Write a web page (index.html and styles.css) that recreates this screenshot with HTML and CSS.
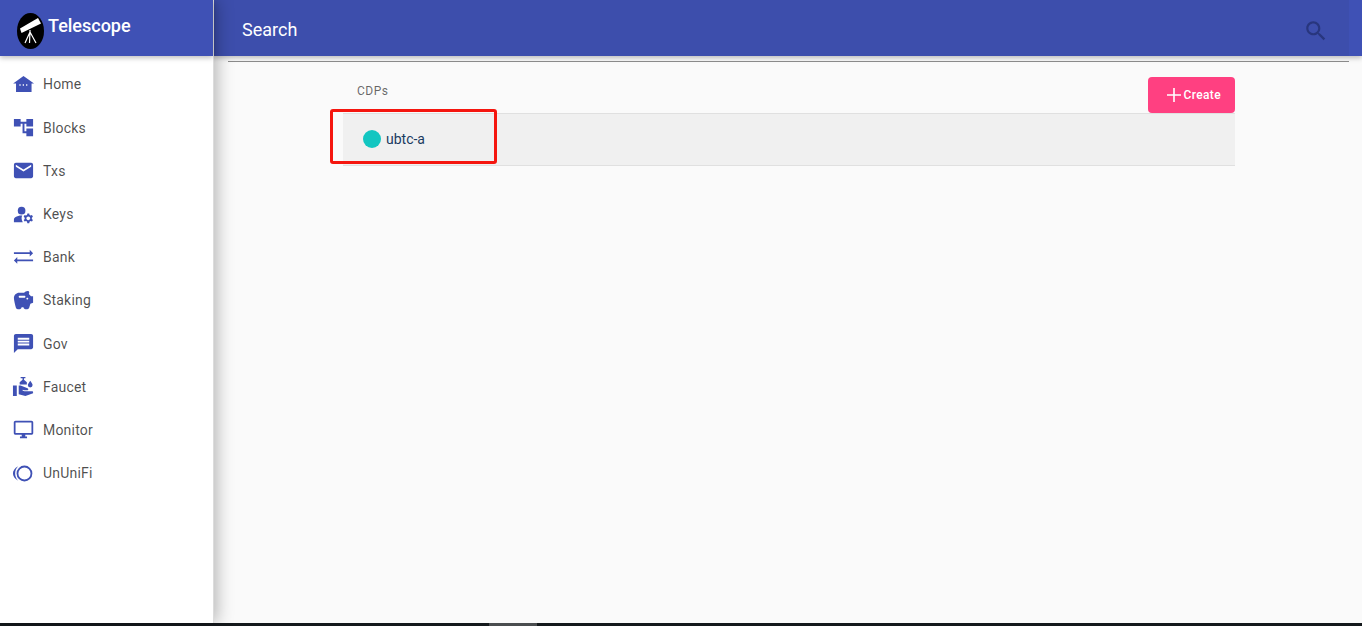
FILE: index.html
```html
<!DOCTYPE html>
<html lang="en">
<head>
<meta charset="utf-8">
<title>Telescope</title>
<link rel="stylesheet" href="styles.css">
</head>
<body>
<div class="app">
  <aside class="sidenav">
    <div class="brand">
      <svg class="brand-logo" viewBox="0 0 27 36">
        <ellipse cx="13.5" cy="18" rx="13.5" ry="18" fill="#000"/>
        <path d="M3 15.500 L21 5 L24 10.500 L4.500 20 Z" fill="#fff"/>
        <path d="M13 17 L13 19 M13 19 L8 30 M13 19 L12.500 30 M13 19 L19 30" stroke="#fff" stroke-width="1.2" fill="none"/>
      </svg>
      <span class="brand-name">Telescope</span>
    </div>
    <nav class="nav">
      <a class="nav-item"><svg class="icon" viewBox="0 0 24 24"><path d="M12 3.100 L23 10.900 H20.400 V19.800 H4.200 V10.900 H1.200 Z M7.700 11.800 H9 V13.300 H7.700 Z M11.200 11.800 H12.500 V13.300 H11.200 Z M14.700 11.800 H16 V13.300 H14.700 Z" fill-rule="evenodd"/></svg><span>Home</span></a>
      <a class="nav-item"><svg class="icon" viewBox="0 0 24 24"><path d="M22 11V3h-7v3H9V3H2v8h7V8h2v10h4v3h7v-8h-7v3h-2V8h2v3z"/></svg><span>Blocks</span></a>
      <a class="nav-item"><svg class="icon" viewBox="0 0 24 24"><path d="M20 4H4c-1.1 0-1.99.9-1.99 2L2 18c0 1.1.9 2 2 2h16c1.1 0 2-.9 2-2V6c0-1.1-.9-2-2-2zm0 4l-8 5-8-5V6l8 5 8-5v2z"/></svg><span>Txs</span></a>
      <a class="nav-item"><svg class="icon" viewBox="0 0 24 24"><circle cx="10" cy="8" r="4"/><path d="M10.67 13.02c-.22-.01-.44-.02-.67-.02-2.42 0-4.68.67-6.61 1.82-.88.52-1.39 1.5-1.39 2.53V20h9.26c-.79-1.13-1.26-2.51-1.26-4 0-1.07.25-2.07.67-2.98z"/><path d="M20.75 16c0-.22-.03-.42-.06-.63l1.14-1.01-1-1.73-1.45.49c-.32-.27-.68-.48-1.08-.63L18 11h-2l-.3 1.49c-.4.15-.76.36-1.08.63l-1.45-.49-1 1.73 1.14 1.01c-.03.21-.06.41-.06.63s.03.42.06.63l-1.14 1.01 1 1.73 1.45-.49c.32.27.68.48 1.08.63L16 21h2l.3-1.49c.4-.15.76-.36 1.08-.63l1.45.49 1-1.73-1.14-1.01c.03-.21.06-.41.06-.63zM17 18c-1.1 0-2-.9-2-2s.9-2 2-2 2 .9 2 2-.9 2-2 2z"/></svg><span>Keys</span></a>
      <a class="nav-item"><svg class="icon" viewBox="0 0 24 24"><path d="M2 6.600h16.500V4L22 7.500 18.500 11V8.400H2zM22 14.100H5.500V11.500L2 15l3.500 3.500v-2.600H22z"/></svg><span>Bank</span></a>
      <a class="nav-item"><svg class="icon" viewBox="0 0 24 24"><path d="M19.83 7.5l-2.27-2.27c.07-.42.18-.81.32-1.15.11-.26.15-.56.09-.87-.13-.72-.83-1.22-1.57-1.21-1.59.03-2.97.81-3.87 2H7.5C4.46 4 2 6.46 2 9.5c0 2.25 1.37 7.48 2.08 10.04.24.86 1.03 1.46 1.93 1.46H8c1.1 0 2-.9 2-2h2c0 1.1.9 2 2 2h2.01c.88 0 1.66-.58 1.92-1.43l1.25-4.16 2.82-.97V7.5h-2.17zM13 9H8c-.55 0-1-.45-1-1s.45-1 1-1h5c.55 0 1 .45 1 1s-.45 1-1 1zm3 2c-.55 0-1-.45-1-1s.45-1 1-1 1 .45 1 1-.45 1-1 1z"/></svg><span>Staking</span></a>
      <a class="nav-item"><svg class="icon" viewBox="0 0 24 24"><path d="M20 2H4c-1.1 0-1.99.9-1.99 2L2 22l4-4h14c1.1 0 2-.9 2-2V4c0-1.1-.9-2-2-2zm-2 12H6v-2h12v2zm0-3H6V9h12v2zm0-3H6V6h12v2z"/></svg><span>Gov</span></a>
      <a class="nav-item"><svg class="icon" viewBox="0 0 24 24"><path d="M1 11h4v11H1zM20 17h-7l-2.09-.73.33-.94L13 16h2.82c.65 0 1.18-.53 1.18-1.18 0-.49-.31-.93-.77-1.11L8.97 11H7v9.02L14 22l8-3v-1c0-.55-.45-1-1-1z"/><path d="M9 2h5v1.500h-1.500V5l3 2.500V10H8V7.500L11 5V3.500H9zM19 6c1 1.500 2.500 3 2.500 4.500a2.500 2.500 0 0 1-5 0c0-.5.2-1 .5-1.500z"/></svg><span>Faucet</span></a>
      <a class="nav-item"><svg class="icon" viewBox="-1 -1 26 26"><path d="M21 2H3c-1.1 0-2 .9-2 2v12c0 1.1.9 2 2 2h7v2H8v2h8v-2h-2v-2h7c1.1 0 2-.9 2-2V4c0-1.1-.9-2-2-2zm0 14H3V4h18v12z"/></svg><span>Monitor</span></a>
      <a class="nav-item"><svg class="icon" viewBox="0 0 24 24"><circle class="ring" cx="13" cy="12" r="7.300"/><path d="M6.500 4.500C2.500 6.500 1 9.500 1 12s1.500 5.500 5.500 7.500C4 17 3.300 14.500 3.300 12s.7-5 3.200-7.500z"/></svg><span>UnUniFi</span></a>
    </nav>
  </aside>
  <div class="main">
    <header class="toolbar">
      <div class="toolbar-inner">
        <span class="search-label">Search</span>
        <svg class="search-icon" viewBox="0 0 24 24"><path d="M15.500 14h-.79l-.28-.27C15.410 12.590 16 11.110 16 9.500 16 5.910 13.090 3 9.500 3S3 5.910 3 9.500 5.910 16 9.500 16c1.610 0 3.090-.59 4.230-1.570l.27.28v.79l5 4.990L20.490 19l-4.990-5zm-6 0C7.010 14 5 11.990 5 9.500S7.010 5 9.500 5 14 7.010 14 9.500 11.990 14 9.500 14z"/></svg>
      </div>
    </header>
    <hr class="divider">
    <section class="content">
      <div class="content-head">
        <span class="section-title">CDPs</span>
        <button class="create-btn"><svg class="plus" viewBox="0 0 14 14"><path d="M6.200 0h1.600v6.200H14v1.600H7.800V14H6.200V7.800H0V6.200h6.200z"/></svg>Create</button>
      </div>
      <div class="list">
        <a class="list-row"><span class="dot"></span><span class="row-label">ubtc-a</span></a>
      </div>
    </section>
  </div>
  <div class="annotation"></div>
</div>
<div class="taskbar"><span class="taskbar-thumb"></span></div>
</body>
</html>
```
FILE: styles.css
```css
* { box-sizing: border-box; }
html, body { margin: 0; height: 100%; overflow: hidden; }
body {
  display: flex;
  flex-direction: column;
  height: 626px;
  font-family: Roboto, "Liberation Sans", sans-serif;
  background: #fafafa;
}
.app { position: relative; display: flex; flex: 1; min-height: 0; }
.sidenav {
  width: 214px;
  flex: none;
  background: #fff;
  border-right: 1px solid #dcdcdc;
  box-shadow: 3px 0 16px rgba(0, 0, 0, .28);
  position: relative;
  z-index: 2;
}
.brand {
  height: 56px;
  background: #3f51b5;
  display: flex;
  align-items: flex-start;
  padding: 13px 0 0 17px;
  box-shadow: 0 2px 5px rgba(0, 0, 0, .25);
}
.brand-logo { width: 27px; height: 36px; flex: none; }
.brand-name {
  color: #fff;
  font-size: 18px;
  font-weight: 500;
  line-height: 26px;
  margin-left: 4px;
}
.nav { display: flex; flex-direction: column; padding-top: 6.900px; }
.nav-item {
  display: flex;
  align-items: center;
  height: 43.200px;
  padding-left: 12px;
  font-size: 14px;
  letter-spacing: .2px;
  color: rgba(0, 0, 0, .7);
}
.icon { width: 23px; height: 23px; fill: #3f51b5; flex: none; margin-right: 8px; }
.ring { fill: none; stroke: #3f51b5; stroke-width: 1.900px; }
.main { flex: 1; min-width: 0; display: flex; flex-direction: column; }
.toolbar {
  height: 56px;
  flex: none;
  background: #3f51b5;
  box-shadow: 0 2px 5px rgba(0, 0, 0, .25);
}
.toolbar-inner {
  height: 56px;
  margin-right: 13px;
  padding: 2px 20px 0 28px;
  background: #3d4eac;
  display: flex;
  align-items: center;
  justify-content: space-between;
}
.search-label { color: #fff; font-size: 18px; }
.search-icon { width: 26px; height: 26px; margin-top: 3px; fill: rgba(20, 30, 80, .5); }
.divider {
  height: 1px;
  margin: 5px 13px 0 14px;
  border: 0;
  background: #8a8a8a;
  flex: none;
}
.content { padding: 15px 127px 0 129px; }
.content-head {
  display: flex;
  justify-content: space-between;
  align-items: flex-start;
  height: 36px;
  padding-left: 14px;
}
.section-title {
  font-size: 12px;
  line-height: 28px;
  letter-spacing: .5px;
  color: rgba(0, 0, 0, .6);
}
.create-btn {
  width: 87px;
  height: 36px;
  display: flex;
  align-items: center;
  justify-content: flex-end;
  padding: 0 14px 0 0;
  border: 0;
  border-radius: 4px;
  background: #ff4081;
  color: #fff;
  font-family: inherit;
  font-size: 12px;
  font-weight: 500;
  letter-spacing: .35px;
}
.plus { width: 14px; height: 14px; fill: #fff; margin-right: 3px; }
.list { border-top: 1px solid #e0e0e0; border-bottom: 1px solid #e0e0e0; background: #f0f0f0; }
.list-row { display: flex; align-items: center; height: 51px; padding: 0 0 2px 20px; }
.dot { width: 18px; height: 18px; border-radius: 50%; background: #12c6c1; margin-right: 5px; }
.row-label { font-size: 14px; color: #1a3a60; }
.annotation {
  position: absolute;
  left: 330px;
  top: 109px;
  width: 167px;
  height: 55px;
  border: 3px solid #f5160f;
  border-radius: 3px;
}
.taskbar {
  height: 3px;
  flex: none;
  background: #14191c;
  padding-left: 489px;
}
.taskbar-thumb { display: block; width: 48px; height: 3px; background: #4a4d4f; }
```
